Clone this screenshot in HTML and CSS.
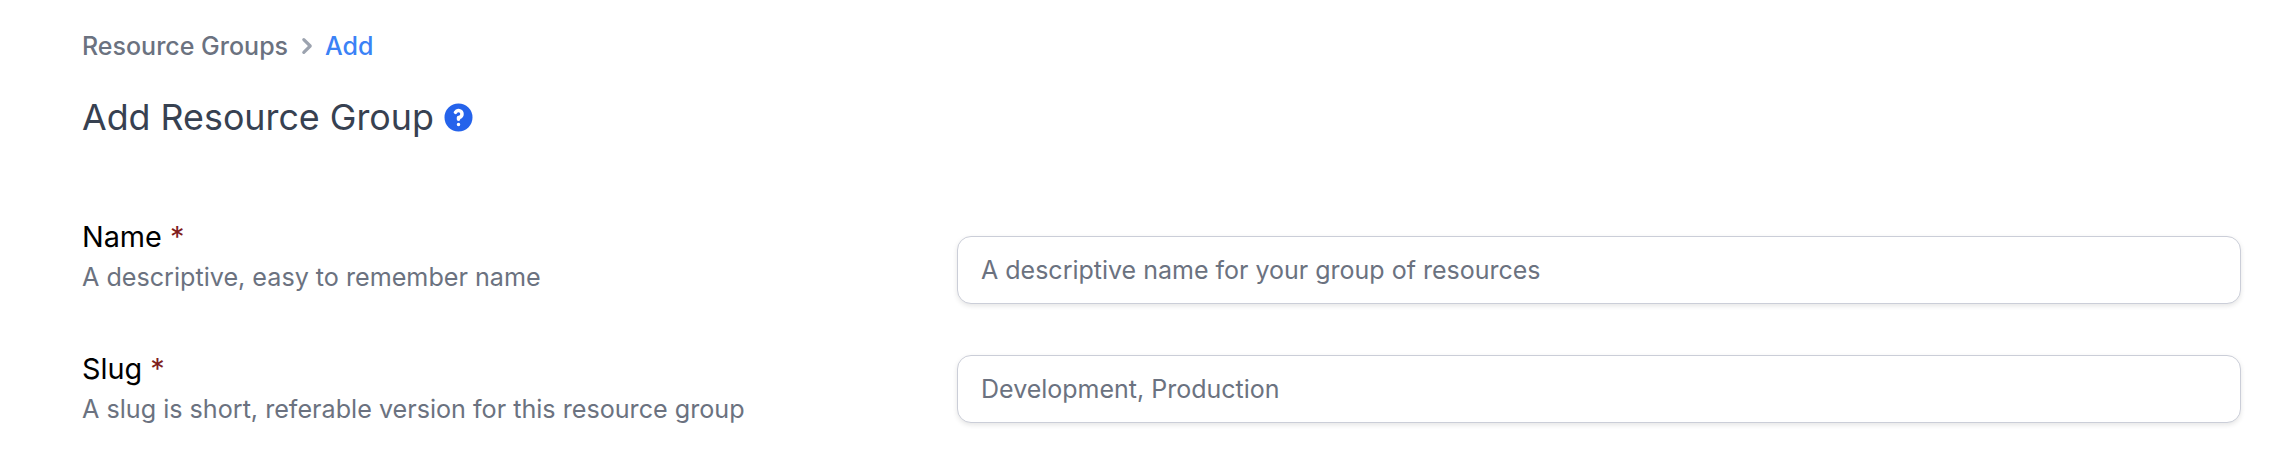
FILE: index.html
```html
<!DOCTYPE html>
<html lang="en">
<head>
<meta charset="utf-8">
<title>Add Resource Group</title>
<link rel="stylesheet" href="styles.css">
</head>
<body>
<main class="page">
  <nav class="crumbs">
    <a class="crumb">Resource Groups</a>
    <svg class="chev" viewBox="0 0 20 20" fill="currentColor"><path fill-rule="evenodd" d="M7.293 14.707a1 1 0 010-1.414L10.586 10 7.293 6.707a1 1 0 011.414-1.414l4 4a1 1 0 010 1.414l-4 4a1 1 0 01-1.414 0z" clip-rule="evenodd"/></svg>
    <a class="crumb current">Add</a>
  </nav>
  <header class="title-row">
    <h1 class="title">Add Resource Group</h1>
    <svg class="help" viewBox="0 0 20 20" fill="currentColor"><path fill-rule="evenodd" d="M18 10a8 8 0 11-16 0 8 8 0 0116 0zm-8-3a1 1 0 00-.867.5 1 1 0 11-1.731-1A3 3 0 0113 8a3.001 3.001 0 01-2 2.83V11a1 1 0 11-2 0v-1a1 1 0 011-1 1 1 0 100-2zm0 8a1 1 0 100-2 1 1 0 000 2z" clip-rule="evenodd"/></svg>
  </header>
  <form class="form">
    <div class="labels">
      <div class="label-box">
        <label class="label" for="name">Name <span class="req">*</span></label>
        <p class="hint">A descriptive, easy to remember name</p>
      </div>
      <div class="label-box">
        <label class="label" for="slug">Slug <span class="req">*</span></label>
        <p class="hint">A slug is short, referable version for this resource group</p>
      </div>
    </div>
    <div class="inputs">
      <input class="input" id="name" placeholder="A descriptive name for your group of resources">
      <input class="input" id="slug" placeholder="Development, Production">
    </div>
  </form>
</main>
</body>
</html>
```
FILE: styles.css
```css
* { box-sizing: border-box; }
html, body { margin: 0; background: #fff; }
body { font-family: Inter, "Liberation Sans", sans-serif; }
.page { padding: 30px 54px 0 82px; height: 464px; overflow: hidden; }
.crumbs { display: flex; align-items: center; height: 32px; font-size: 25px; font-weight: 500; color: #6b7280; }
.crumb { line-height: 32px; }
.current { color: #3b82f6; }
.chev { width: 32px; height: 32px; margin: 0 2px 0 3px; color: #9ca3af; }
.title-row { display: flex; align-items: center; gap: 7px; margin-top: 33px; height: 44px; }
.title { margin: 0; font-size: 35.8px; font-weight: 400; line-height: 44px; color: #374151; }
.help { width: 35px; height: 35px; color: #2563eb; }
.form { margin-top: 77px; display: grid; grid-template-columns: 875px 1284px; }
.labels { display: flex; flex-direction: column; gap: 52px; padding-top: 1px; }
.label-box { display: flex; flex-direction: column; }
.label { font-size: 28.8px; line-height: 40px; color: #000; }
.req { color: #7f1d1d; }
.hint { margin: 0; font-size: 25.15px; line-height: 40px; color: #6b7280; }
.inputs { display: flex; flex-direction: column; gap: 51px; padding-top: 20px; }
.input { height: 68px; width: 100%; padding: 0 23px; border: 1px solid #cbced8; border-radius: 14px; font: 25px Inter, "Liberation Sans", sans-serif; box-shadow: 0 2px 5px rgba(0,0,0,.1); background: #fff; }
.input::placeholder { color: #6b7280; opacity: 1; }
```
